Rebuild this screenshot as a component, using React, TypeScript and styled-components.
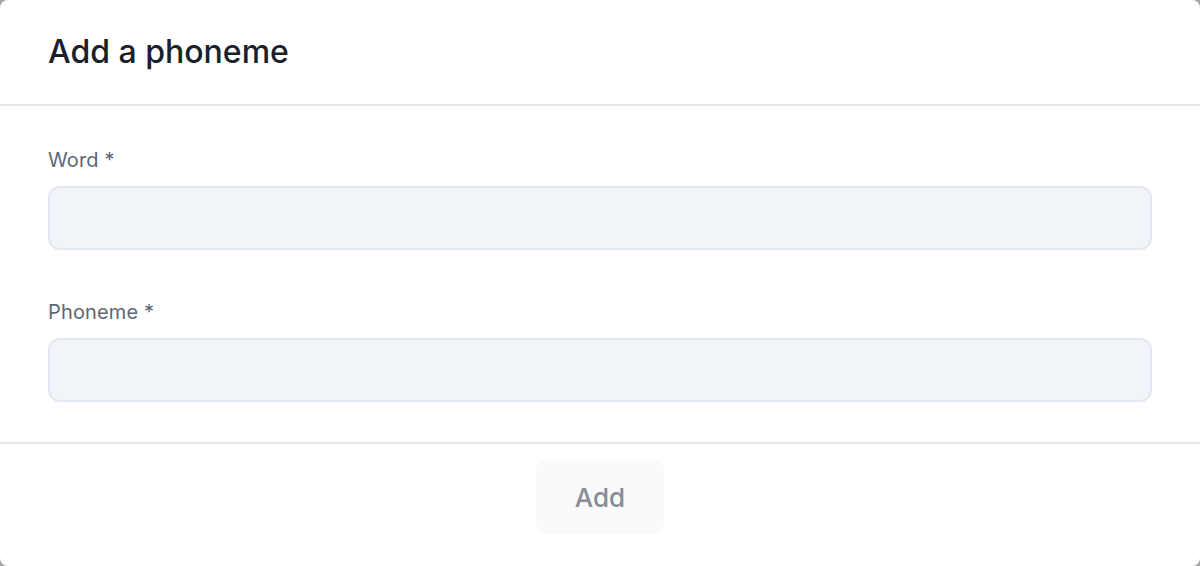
import * as React from 'react'
import styled, { createGlobalStyle } from 'styled-components'

const GlobalStyle = createGlobalStyle`
  html, body {
    margin: 0;
    padding: 0;
    height: 100%;
    background: #a6a6a6;
    font-family: Inter, "Noto Sans", sans-serif;
  }
  #root {
    height: 100%;
  }
`

const Modal = styled('section')`
  height: 566px;
  background: #ffffff;
  border-radius: 8px;
  display: flex;
  flex-direction: column;
  overflow: hidden;
`

const Header = styled('header')`
  padding: 32px 48px;
  border-bottom: 2px solid #e6e6e6;
`

const Title = styled('h2')`
  margin: 0;
  font-size: 32px;
  line-height: 40px;
  font-weight: 500;
  color: #1a202c;
`

const Body = styled('div')`
  padding: 40px 48px;
  display: flex;
  flex-direction: column;
  gap: 48px;
  border-bottom: 2px solid #e6e6e6;
`

const Field = styled('div')`
  display: flex;
  flex-direction: column;
  gap: 12px;
`

const Label = styled('label')`
  font-size: 20px;
  line-height: 28px;
  font-weight: 400;
  letter-spacing: 0.15px;
  color: #5f6673;
`

const Input = styled('input')`
  box-sizing: border-box;
  height: 64px;
  width: 100%;
  padding: 0 20px;
  border: 2px solid #e2e8f0;
  border-radius: 12px;
  background: #f1f5f9;
  font: inherit;
  font-size: 20px;
  color: #1a202c;
  outline: none;
`

const Footer = styled('footer')`
  display: flex;
  justify-content: center;
  padding: 16px 48px;
`

const Button = styled('button')`
  width: 128px;
  height: 74px;
  border: none;
  border-radius: 12px;
  background: #fafafa;
  color: #878c96;
  font-family: inherit;
  font-size: 26px;
  font-weight: 500;
  cursor: not-allowed;
`

export default function App() {
  return (
    <>
      <GlobalStyle />
      <Modal>
        <Header>
          <Title>Add a phoneme</Title>
        </Header>
        <Body>
          <Field>
            <Label htmlFor="word">Word *</Label>
            <Input id="word" />
          </Field>
          <Field>
            <Label htmlFor="phoneme">Phoneme *</Label>
            <Input id="phoneme" />
          </Field>
        </Body>
        <Footer>
          <Button disabled>Add</Button>
        </Footer>
      </Modal>
    </>
  )
}
